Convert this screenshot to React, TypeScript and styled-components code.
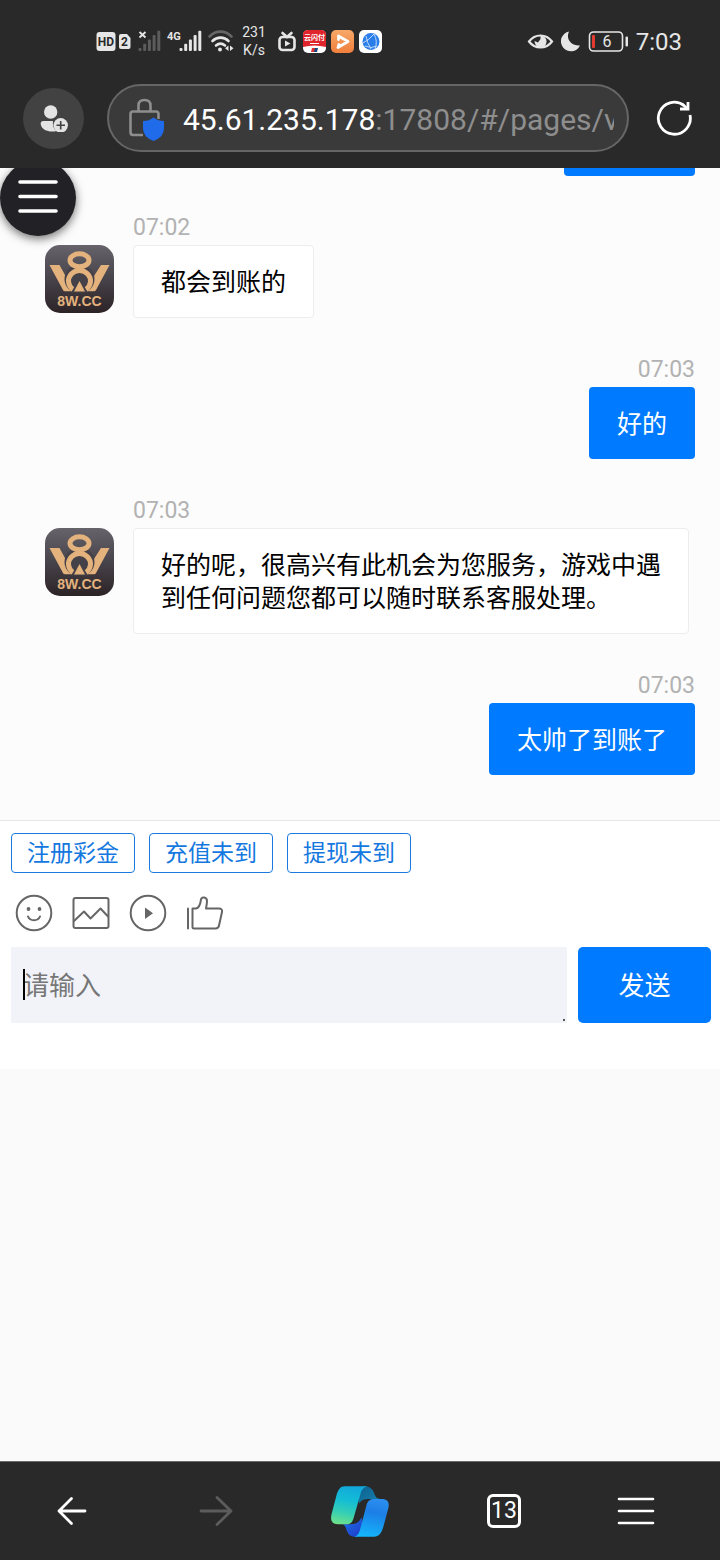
import React from "react";
import styled, { createGlobalStyle } from "styled-components";

const GlobalStyle = createGlobalStyle`
  * { box-sizing: border-box; }
  body {
    margin: 0;
    background: #fafafa;
    font-family: "Noto Sans", "Noto Sans CJK SC", sans-serif;
  }
  button { font: inherit; border: 0; padding: 0; margin: 0; background: none; }
  svg { display: block; flex: none; }
`;

const Page = styled.div`
  min-height: 100vh;
  display: flex;
  flex-direction: column;
`;

/* ---------- browser header ---------- */

const Header = styled.header`
  background: #292929;
  color: #e6e6e6;
  padding-bottom: 16px;
  font-family: Roboto, "Noto Sans CJK SC", sans-serif;
`;

const StatusBar = styled.div`
  display: flex;
  justify-content: space-between;
  align-items: center;
  height: 84px;
  padding: 0 38px 2px 96px;
`;

const StatusGroup = styled.div<{ $gap: number }>`
  display: flex;
  align-items: center;
  gap: ${(p) => p.$gap}px;
`;

const NetSpeed = styled.div`
  width: 32px;
  text-align: center;
  font-size: 14px;
  line-height: 18px;
`;

const Clock = styled.time`
  font-size: 24px;
  line-height: 28px;
  padding-top: 2px;
`;

const AddressRow = styled.div`
  display: flex;
  align-items: center;
  padding: 0 26px 0 23px;
`;

const ProfileButton = styled.button`
  width: 61px;
  height: 61px;
  border-radius: 50%;
  background: #424242;
  display: flex;
  align-items: center;
  justify-content: center;
  margin-right: 23px;
`;

const AddressPill = styled.div`
  flex: 1;
  min-width: 0;
  height: 68px;
  border: 2px solid #666;
  border-radius: 34px;
  background: #3a3a3a;
  display: flex;
  align-items: center;
  gap: 18px;
  padding: 4px 13px 0 20px;
`;

const Url = styled.div`
  flex: 1;
  min-width: 0;
  overflow: hidden;
  white-space: nowrap;
  font-size: 30px;
  line-height: 40px;
  color: #8e8e8e;
`;

const Host = styled.span`
  color: #fff;
`;

const ReloadButton = styled.button`
  margin-left: 26px;
`;

/* ---------- chat ---------- */

const Chat = styled.main`
  position: relative;
  overflow: hidden;
  background: #fcfcfc;
  padding: 0 25px 45px 45px;
  display: flex;
  flex-direction: column;
  gap: 35px;
`;

const FloatingMenu = styled.button`
  position: absolute;
  left: 0;
  top: -8px;
  width: 76px;
  height: 76px;
  border-radius: 50%;
  background: #222226;
  box-shadow: 0 3px 10px rgba(0, 0, 0, 0.55);
  display: flex;
  align-items: center;
  justify-content: center;
  padding-bottom: 3px;
`;

const ScrolledBubble = styled.div`
  align-self: flex-end;
  width: 131px;
  height: 8px;
  border-radius: 0 0 4px 4px;
  background: #007aff;
`;

const Message = styled.article<{ $mine?: boolean }>`
  display: flex;
  align-items: flex-end;
  justify-content: ${(p) => (p.$mine ? "flex-end" : "flex-start")};
  gap: 19px;
`;

const AvatarSlot = styled.div`
  align-self: flex-start;
  padding-top: 34px;
`;

const Body = styled.div<{ $mine?: boolean }>`
  display: flex;
  flex-direction: column;
  align-items: ${(p) => (p.$mine ? "flex-end" : "flex-start")};
`;

const Time = styled.time`
  font-family: Roboto, sans-serif;
  font-size: 23px;
  line-height: 34px;
  color: #b2b2b2;
`;

const Bubble = styled.p<{ $mine?: boolean }>`
  margin: 0;
  max-width: 556px;
  font-size: 25px;
  line-height: 33px;
  border-radius: 4px;
  padding: ${(p) => (p.$mine ? "20px 28px 19px" : "19px 27px")};
  color: ${(p) => (p.$mine ? "#fff" : "#000")};
  background: ${(p) => (p.$mine ? "#007aff" : "#fff")};
  border: ${(p) => (p.$mine ? "0" : "1px solid #ededed")};
`;

/* ---------- composer ---------- */

const Composer = styled.form`
  background: #fff;
  border-top: 1px solid #e8e8e8;
  padding: 12px 9px 46px 11px;
`;

const QuickReplies = styled.div`
  display: flex;
  gap: 14px;
`;

const QuickReply = styled.button`
  height: 40px;
  padding: 0 15px 2px;
  border: 1px solid #1a7ae0;
  border-radius: 4px;
  font-size: 23px;
  line-height: 32px;
  color: #1478e0;
`;

const Tools = styled.div`
  display: flex;
  gap: 19px;
  padding: 21px 4px 15px;
`;

const EntryRow = styled.div`
  display: flex;
  gap: 11px;
`;

const Entry = styled.label`
  position: relative;
  flex: 1;
  display: flex;
`;

const EntryBox = styled.textarea`
  width: 100%;
  height: 76px;
  border: 0;
  outline: 0;
  resize: none;
  overflow: hidden;
  background: #f2f3f8;
  padding: 20px 12px;
  font-family: inherit;
  font-size: 26px;
  line-height: 36px;
  &::placeholder { color: #777; opacity: 1; }
`;

const Caret = styled.span`
  position: absolute;
  left: 12px;
  top: 22px;
  width: 2px;
  height: 31px;
  background: #000;
`;

const Grip = styled.span`
  position: absolute;
  right: 2px;
  bottom: 2px;
  width: 2px;
  height: 2px;
  background: #555;
`;

const SendButton = styled.button`
  width: 133px;
  padding-bottom: 2px;
  border-radius: 5px;
  background: #007aff;
  color: #fff;
  font-size: 26px;
`;

const Filler = styled.div`
  flex: 1;
`;

/* ---------- bottom navigation ---------- */

const BottomNav = styled.nav`
  display: grid;
  grid-template-columns: 12fr 12fr 12fr 12fr 10fr;
  height: 99px;
  padding-right: 24px;
  border-top: 1px solid #6a6a6a;
  background: #292929;
`;

const NavButton = styled.button`
  display: flex;
  align-items: center;
  justify-content: center;
`;

const TabCount = styled.span`
  width: 34px;
  height: 34px;
  border: 3px solid #fff;
  border-radius: 6px;
  color: #fff;
  font-family: Roboto, sans-serif;
  font-size: 23px;
  line-height: 28px;
  display: flex;
  justify-content: center;
`;

/* Status icons share one coordinate grid, so each takes its slice of it. */
const StatusIcon = ({ x, w, children }: { x: number; w: number; children: React.ReactNode }) => (
  <svg width={w} height={28} viewBox={`${x} 27 ${w} 28`} aria-hidden="true">
    {children}
  </svg>
);

const Bars = ({ x, color }: { x: number; color: string }) => (
  <g fill={color}>
    {[3, 7, 11, 15, 19].map((h, i) => (
      <rect key={h} x={x + i * 4.7} y={51 - h - i * 0.3} width="3" height={h + i * 0.3} rx="1" />
    ))}
  </g>
);

const Avatar = () => (
  <svg width="69" height="68" viewBox="0 0 69 68" role="img" aria-label="8W.CC">
    <defs>
      <linearGradient id="avatarBg" x1="0" y1="0" x2="0" y2="1">
        <stop offset="0" stopColor="#66636b" />
        <stop offset="0.5" stopColor="#47434a" />
        <stop offset="1" stopColor="#2c2326" />
      </linearGradient>
    </defs>
    <rect width="69" height="68" rx="15" fill="url(#avatarBg)" />
    <g fill="#e3b27d">
      <path d="M4.500 20H14.500L20 30L29 46.500H20.500Q18.800 46.500 18 45Z" />
      <path d="M64.500 20H56L49 31L40 46.500H48.500Q50.200 46.500 51 45Z" />
    </g>
    <ellipse cx="34.500" cy="34" rx="15" ry="14.500" fill="#454148" />
    <rect x="19" y="46.500" width="31" height="3" fill="#3c363b" />
    <g fill="none" stroke="#e3b27d">
      <ellipse cx="34.500" cy="15.300" rx="9.500" ry="6.500" strokeWidth="5" />
      <path d="M28 44.500A11 10.500 0 1 1 41 44.500" strokeWidth="5" />
    </g>
    <path d="M34.500 32L42.500 47.500H26.500Z" fill="#454148" />
    <path d="M34.500 36L40 46.500H29Z" fill="#e3b27d" />
    <text
      x="34.500"
      y="61"
      textAnchor="middle"
      fontFamily="Liberation Sans, sans-serif"
      fontWeight="700"
      fontSize="14"
      fill="#e3b27d"
    >
      8W.CC
    </text>
  </svg>
);

const Copilot = () => (
  <svg width="58" height="51" viewBox="93 93 172 152" aria-hidden="true">
    <defs>
      <linearGradient id="cpLeft" x1="0.500" y1="0" x2="0.300" y2="1">
        <stop offset="0" stopColor="#12a9da" />
        <stop offset="0.350" stopColor="#13bcd6" />
        <stop offset="0.700" stopColor="#35cfb4" />
        <stop offset="1" stopColor="#6ce08c" />
      </linearGradient>
      <linearGradient id="cpRight" x1="0.600" y1="0" x2="0.400" y2="1">
        <stop offset="0" stopColor="#2b8dee" />
        <stop offset="0.350" stopColor="#1c7fe6" />
        <stop offset="1" stopColor="#14b4fb" />
      </linearGradient>
      <linearGradient id="cpTop" x1="0" y1="0" x2="1" y2="1">
        <stop offset="0" stopColor="#0b5f8c" />
        <stop offset="1" stopColor="#1883b4" />
      </linearGradient>
      <linearGradient id="cpBottom" x1="0" y1="0" x2="1" y2="1">
        <stop offset="0" stopColor="#1b78e8" />
        <stop offset="1" stopColor="#2036c8" />
      </linearGradient>
    </defs>
    <path d="M190 94C208 94 216 101 221 114C225 126 229 131 240 132H206C190 132 182 136 177 146L172 120Z" fill="url(#cpTop)" />
    <path d="M125 207H152C168 206 178 200 183 186L188 205L171 244H164C148 244 143 235 139 224C136 214 133 208 125 207Z" fill="url(#cpBottom)" />
    <path d="M134 94H204C190 95 184 104 180 118L160 188C156 202 150 207 138 207H113C96 207 90 196 94 178L108 124C114 103 120 94 134 94Z" fill="url(#cpLeft)" />
    <path d="M222 132H244C262 132 268 143 263 161L249 213C243 235 235 244 221 244H162C172 243 176 234 180 220L198 151C202 137 209 132 222 132Z" fill="url(#cpRight)" />
  </svg>
);

type Msg = { time: string; text: string; mine?: boolean };

const messages: Msg[] = [
  { time: "07:02", text: "都会到账的" },
  { time: "07:03", text: "好的", mine: true },
  { time: "07:03", text: "好的呢，很高兴有此机会为您服务，游戏中遇到任何问题您都可以随时联系客服处理。" },
  { time: "07:03", text: "太帅了到账了", mine: true },
];

const quickReplies = ["注册彩金", "充值未到", "提现未到"];

const toolIcons: { label: string; art: React.ReactNode }[] = [
  {
    label: "表情",
    art: (
      <>
        <circle cx="19" cy="19" r="17.300" />
        <path d="M13 22.500C15 27.500 23 27.500 25 22.500" />
        <g fill="#666" stroke="none">
          <circle cx="13.500" cy="15" r="1.900" />
          <circle cx="24.500" cy="15" r="1.900" />
        </g>
      </>
    ),
  },
  {
    label: "图片",
    art: (
      <>
        <rect x="1.500" y="4" width="35" height="30" rx="2" />
        <path d="M2 27L12 17.500L18.500 24.500L28.500 14.500L36 22.500" />
      </>
    ),
  },
  {
    label: "视频",
    art: (
      <>
        <circle cx="19" cy="19" r="17.300" />
        <path d="M16 13.500V25L24 19.200Z" fill="#666" stroke="none" />
      </>
    ),
  },
  {
    label: "评价",
    art: (
      <>
        <path d="M2 14.500V34.500" />
        <path d="M6.500 14.500H10C13 14 14.500 9 15 5.500C15.500 2.500 21 2.500 21 7C21 9.500 20.500 12 20 14.500H33C35.500 14.500 36.500 16 36 18L33 31.500C32.600 33.500 31.500 34.500 29.500 34.500H8C7 34.500 6.500 34 6.500 33Z" />
      </>
    ),
  },
];

export default function App() {
  return (
    <Page>
      <GlobalStyle />
      <Header>
        <StatusBar>
          <StatusGroup $gap={3}>
            <StatusIcon x={96} w={20}>
              <rect x="96.500" y="32" width="19" height="19" rx="3" fill="#e6e6e6" />
              <text x="106" y="46" textAnchor="middle" fontSize="12" fontWeight="700" fontFamily="Roboto" fill="#292929">HD</text>
            </StatusIcon>
            <StatusIcon x={119} w={12}>
              <path d="M121 34H127L130.500 38V47Q130.500 49 128.500 49H121Q119 49 119 47V36Q119 34 121 34Z" fill="#e6e6e6" />
              <text x="124.500" y="46" textAnchor="middle" fontSize="12" fontWeight="700" fontFamily="Roboto" fill="#292929">2</text>
            </StatusIcon>
            <StatusIcon x={134} w={30}>
              <Bars x={138.5} color="#5c5c5c" />
              <path d="M139.500 32L145.500 37.500M145.500 32L139.500 37.500" stroke="#e6e6e6" strokeWidth="1.800" />
            </StatusIcon>
            <StatusIcon x={167} w={35}>
              <text x="167" y="40" fontSize="11" fontWeight="700" fontFamily="Roboto" fill="#e6e6e6">4G</text>
              <Bars x={179.5} color="#e6e6e6" />
            </StatusIcon>
            <StatusIcon x={205} w={30}>
              <g fill="none" strokeLinecap="round" strokeWidth="2.600">
                <path d="M209.500 36.500C216 30 225 30 231.500 36.500" stroke="#666" />
                <path d="M212.500 41C217 36.500 224 36.500 228.500 41" stroke="#e6e6e6" />
                <path d="M216 45.500C219 43 222 43 225 45.500" stroke="#e6e6e6" />
              </g>
              <circle cx="220" cy="49.500" r="2" fill="#e6e6e6" />
              <path d="M228.500 45.500V51L225 48.300ZM230 45.500V51L233.500 48.300Z" fill="#e6e6e6" />
            </StatusIcon>
            <NetSpeed>
              231
              <br />
              K/s
            </NetSpeed>
            <StatusIcon x={273} w={27}>
              <g fill="none" stroke="#e6e6e6" strokeWidth="2.600" strokeLinecap="round">
                <rect x="279.500" y="37" width="15" height="13" rx="3" />
                <path d="M282.500 33L287 37L291.500 33" />
              </g>
              <path d="M285 40.500V46.500L290.500 43.500Z" fill="#e6e6e6" />
            </StatusIcon>
            <StatusIcon x={303} w={23}>
              <rect x="303" y="30" width="23" height="23" rx="5" fill="#fff" />
              <path d="M303 47V35Q303 30 308 30H321Q326 30 326 35V47Q314.500 44 303 47Z" fill="#e0242b" />
              <text x="314.500" y="40" textAnchor="middle" fontSize="7" fontWeight="700" fontFamily="Noto Sans CJK SC" fill="#fff">云闪付</text>
              <path d="M310 43.500H319" stroke="#fff" strokeWidth="1" />
              <path d="M312 48H315V52H311Z" fill="#d33" />
              <path d="M315 48H318L317 52H314Z" fill="#124a80" />
            </StatusIcon>
            <StatusIcon x={329} w={25}>
              <defs>
                <linearGradient id="player" x1="0" y1="0" x2="0" y2="1">
                  <stop offset="0" stopColor="#f7a868" />
                  <stop offset="1" stopColor="#f07f3c" />
                </linearGradient>
              </defs>
              <rect x="331" y="30" width="23" height="23" rx="5" fill="url(#player)" />
              <path d="M338.500 39.500V36L348 41.500L338 47.500L339 44.500" fill="none" stroke="#fff" strokeWidth="2.800" strokeLinejoin="round" strokeLinecap="round" />
            </StatusIcon>
            <StatusIcon x={357} w={25}>
              <rect x="359" y="30" width="23" height="23" rx="5" fill="#fff" />
              <circle cx="371" cy="41.500" r="8.500" fill="#2b7de9" />
              <g fill="none" stroke="#bcd8fb" strokeWidth="1">
                <path d="M363 43Q369 40 374 34M374 34Q378 41 375 49M365 46Q371 49 377 46M366 36Q367 43 371 49" />
              </g>
            </StatusIcon>
          </StatusGroup>
          <StatusGroup $gap={7}>
            <StatusIcon x={527} w={27}>
              <path d="M529 41.500C535 33.500 546 33.500 552 41.500C546 49.500 535 49.500 529 41.500Z" fill="none" stroke="#e6e6e6" strokeWidth="2.200" />
              <path d="M540.500 35.500A6 6 0 1 1 534.600 41L538 42.500L540.500 39Z" fill="#e6e6e6" />
            </StatusIcon>
            <StatusIcon x={561} w={20}>
              <path d="M569 31.500A10 10 0 1 0 580 45.500C571 46 565.500 39 569 31.500Z" fill="#e6e6e6" />
            </StatusIcon>
            <StatusIcon x={588} w={41}>
              <rect x="589.500" y="32" width="33" height="19" rx="4" fill="none" stroke="#e6e6e6" strokeWidth="1.600" />
              <rect x="592" y="35" width="3" height="13" rx="1" fill="#e33b30" />
              <rect x="625.500" y="36.500" width="2.500" height="10" rx="1" fill="#e6e6e6" />
              <text x="607" y="47" textAnchor="middle" fontSize="16" fontFamily="Roboto" fill="#e6e6e6">6</text>
            </StatusIcon>
            <Clock>7:03</Clock>
          </StatusGroup>
        </StatusBar>
        <AddressRow>
          <ProfileButton type="button" aria-label="账户">
            <svg width="30" height="28" viewBox="39 103 30 28">
              <g fill="#e3e3e3">
                <circle cx="50.700" cy="111" r="6.700" />
                <path d="M43 120H53Q52 127 56.500 130Q52 131 48 130Q41 128.500 40.600 122.500Q40.600 120 43 120Z" />
                <circle cx="60.700" cy="124.300" r="7.200" />
              </g>
              <path d="M56.500 124.300H65M60.700 120V128.600" stroke="#424242" strokeWidth="1.600" />
            </svg>
          </ProfileButton>
          <AddressPill>
            <svg width="36" height="44" viewBox="129 99 36 44" aria-hidden="true">
              <path d="M138.500 111.500V106.500Q138.500 101 144.500 101Q150.500 101 150.500 106.500V111.500M158.500 120V115Q158.500 112.500 156 112.500H133Q130.500 112.500 130.500 115V133Q130.500 136 133 136H143" fill="none" stroke="#8e8e8e" strokeWidth="2.600" />
              <path d="M153.500 118.500Q158 122 164 122V129.500Q164 138 153.500 142Q143 138 143 129.500V122Q149 122 153.500 118.500Z" fill="#1f6bea" />
            </svg>
            <Url>
              <Host>45.61.235.178</Host>:17808/#/pages/v
            </Url>
          </AddressPill>
          <ReloadButton type="button" aria-label="刷新">
            <svg width="39" height="38" viewBox="655 99 39 38" fill="none" stroke="#fff" strokeWidth="2.800">
              <path d="M690 115A16 16 0 1 1 684 105.500" />
              <path d="M688 102V109H680" />
              <path d="M682 104L688 109" />
            </svg>
          </ReloadButton>
        </AddressRow>
      </Header>

      <Chat>
        <ScrolledBubble />
        {messages.map((m, i) => (
          <Message key={i} $mine={m.mine}>
            {!m.mine && (
              <AvatarSlot>
                <Avatar />
              </AvatarSlot>
            )}
            <Body $mine={m.mine}>
              <Time>{m.time}</Time>
              <Bubble $mine={m.mine}>{m.text}</Bubble>
            </Body>
          </Message>
        ))}
        <FloatingMenu type="button" aria-label="菜单">
          <svg width="40" height="36" viewBox="0 0 40 36">
            <path d="M2 3H38M2 17.500H38M2 32H38" stroke="#fff" strokeWidth="3.600" strokeLinecap="round" />
          </svg>
        </FloatingMenu>
      </Chat>

      <Composer onSubmit={(e) => e.preventDefault()}>
        <QuickReplies>
          {quickReplies.map((q) => (
            <QuickReply key={q} type="button">
              {q}
            </QuickReply>
          ))}
        </QuickReplies>
        <Tools>
          {toolIcons.map((t) => (
            <button key={t.label} type="button" aria-label={t.label}>
              <svg width="38" height="38" viewBox="0 0 38 38" fill="none" stroke="#666" strokeWidth="2" strokeLinecap="round" strokeLinejoin="round">
                {t.art}
              </svg>
            </button>
          ))}
        </Tools>
        <EntryRow>
          <Entry>
            <EntryBox placeholder="请输入" aria-label="请输入" />
            <Caret />
            <Grip />
          </Entry>
          <SendButton type="submit">发送</SendButton>
        </EntryRow>
      </Composer>

      <Filler />

      <BottomNav>
        <NavButton type="button" aria-label="后退">
          <svg width="30" height="30" viewBox="0 0 30 30" fill="none" stroke="#fff" strokeWidth="2.800" strokeLinecap="round" strokeLinejoin="round">
            <path d="M28 15H2M14.500 2.500L2 15L14.500 27.500" />
          </svg>
        </NavButton>
        <NavButton type="button" aria-label="前进" disabled>
          <svg width="34" height="30" viewBox="0 0 34 30" fill="none" stroke="#5c5c5c" strokeWidth="2.800" strokeLinecap="round" strokeLinejoin="round">
            <path d="M2 15H32M18 1.500L32 15L18 28.500" />
          </svg>
        </NavButton>
        <NavButton type="button" aria-label="Copilot">
          <Copilot />
        </NavButton>
        <NavButton type="button" aria-label="标签页">
          <TabCount>13</TabCount>
        </NavButton>
        <NavButton type="button" aria-label="更多">
          <svg width="38" height="30" viewBox="0 0 38 30" stroke="#fff" strokeWidth="2.600" strokeLinecap="round">
            <path d="M2 3H36M2 15H36M2 27H36" />
          </svg>
        </NavButton>
      </BottomNav>
    </Page>
  );
}
